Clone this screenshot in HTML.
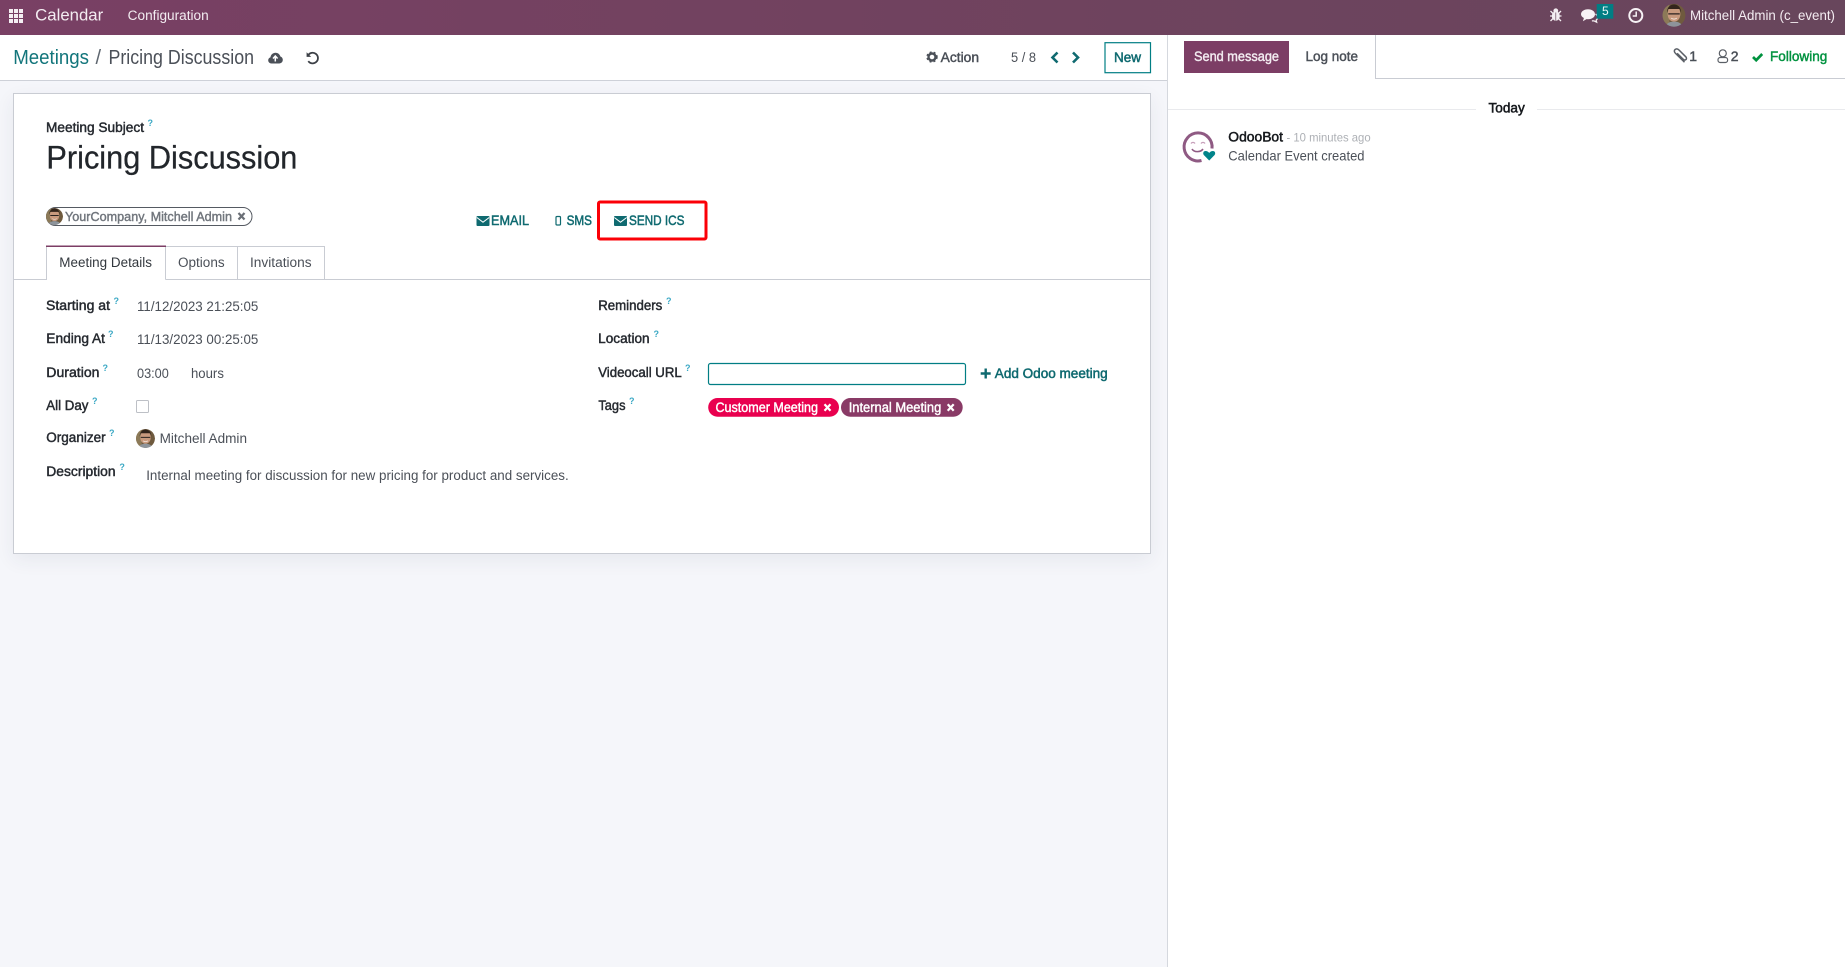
<!DOCTYPE html>
<html lang="en"><head><meta charset="utf-8"><title>Meetings / Pricing Discussion</title>
<style>
html,body{margin:0;padding:0;width:1845px;height:967px;overflow:hidden;background:#f5f6fa;font-family:"Liberation Sans",sans-serif}
.nav{position:absolute;left:0;top:0;width:1845px;height:35px;background:linear-gradient(90deg,#794064,#71425f 45%,#68465c)}
.cp{position:absolute;left:0;top:35px;width:1167px;height:45px;background:#fff;border-bottom:1px solid #ced1d8}
.chatter{position:absolute;left:1167px;top:35px;width:678px;height:932px;background:#fff;border-left:1px solid #d5d8de;box-sizing:border-box}
.sheet{position:absolute;left:13px;top:93px;width:1138px;height:461px;box-sizing:border-box;background:#fff;border:1px solid #c9ccd3;box-shadow:0 6px 18px rgba(40,50,80,.07)}
svg{position:absolute;left:0;top:0}
text{font-family:"Liberation Sans",sans-serif;font-size:14px;fill:#4b5058}
.b{fill:#262a30;stroke:#262a30;stroke-width:.45;font-size:13.5px}
.q{font-weight:bold;fill:#3aa8c4;font-size:9px}
.w{fill:#f3ecf1}
.l{fill:#0f6a70;stroke:#0f6a70;stroke-width:.5;font-size:14px}
.tt{fill:#fff;stroke:#fff;stroke-width:.42;font-size:14px}
.k{fill:#15181c;stroke:#15181c;stroke-width:.5}
.m{stroke:#4b5058;stroke-width:.45}
</style></head><body>
<div class="nav"></div><div class="cp"></div><div class="chatter"></div><div class="sheet"></div>
<svg width="1845" height="967" viewBox="0 0 1845 967" xmlns="http://www.w3.org/2000/svg">
<defs>
<clipPath id="cc"><circle r="10"/></clipPath>
<g id="av"><g clip-path="url(#cc)"><circle r="10" fill="#6f5a3e"/><rect x="-10" y="-10" width="6" height="20" fill="#8c7a58"/><path d="M-5.500-1c0-5 2.500-6.500 5.500-6.500S5.500-6 5.500-1c0 4-2.500 6.500-5.500 6.500S-5.500 3-5.500-1z" fill="#c99a7e"/><path d="M-6-2c-.5-5 3-7.500 6-7.500S6.500-7 6-2l-1-3.500H-5z" fill="#33251c"/><path d="M-5-1.200h4M1-1.200h4M-1-1.200h2" stroke="#2b2320" stroke-width="1.100"/><path d="M-2.500 2.500c1.500 1 3.500 1 5 0" stroke="#f1e2d8" stroke-width=".8" fill="none"/><path d="M-8 11c1-4 4-5.500 8-5.500s7 1.500 8 5.500z" fill="#8d949b"/></g></g>
</defs>

<!-- navbar -->
<g fill="#f4eef2"><rect x="9" y="9" width="4" height="4"/><rect x="14" y="9" width="4" height="4"/><rect x="19" y="9" width="4" height="4"/><rect x="9" y="14" width="4" height="4"/><rect x="14" y="14" width="4" height="4"/><rect x="19" y="14" width="4" height="4"/><rect x="9" y="19" width="4" height="4"/><rect x="14" y="19" width="4" height="4"/><rect x="19" y="19" width="4" height="4"/></g>
<text class="w" x="35.200" y="20.700" style="font-size:16.500px" textLength="68" lengthAdjust="spacingAndGlyphs">Calendar</text>
<text class="w" x="127.700" y="20" style="font-size:13.500px" textLength="81" lengthAdjust="spacingAndGlyphs">Configuration</text>
<!-- bug -->
<g fill="#f4eef2" stroke="#f4eef2"><ellipse cx="1555.800" cy="16" rx="4" ry="4.800" stroke="none"/><circle cx="1555.800" cy="10.800" r="2.400" stroke="none"/><path d="M1550.500 11l2.500 2.500M1561 11l-2.500 2.500M1550 16h3M1561.500 16h-3M1550.500 21l2.500-2.500M1561 21l-2.500-2.500" fill="none" stroke-width="1.300"/></g>
<path d="M1555.800 12.500v8" stroke="#68465c" stroke-width=".7"/>
<!-- chat -->
<path d="M1588 9.200c4 0 7 2.200 7 5s-3 5-7 5l-1.500-.1-3.600 2.200 1-3.300c-1.800-.9-2.900-2.300-2.900-3.800 0-2.800 3-5 7-5z" fill="#f7f2f5"/>
<path d="M1595.500 14c1.400 1 2.200 2.100 2.200 3.300 0 1.200-.6 2.200-1.600 2.900l.6 2-2.800-1.400-2 .1" fill="none" stroke="#f7f2f5" stroke-width="1.200"/>
<rect x="1596.700" y="4" width="16.600" height="14.700" fill="#017e84"/>
<text x="1602" y="14.800" style="font-size:12px;fill:#e9f6f6">5</text>
<!-- clock -->
<circle cx="1635.800" cy="15.500" r="6.500" fill="none" stroke="#f7f2f5" stroke-width="2"/><path d="M1636.200 11.500v4.500h-3.500" fill="none" stroke="#f7f2f5" stroke-width="1.500"/>
<g transform="translate(1674 15.300) scale(1.150)"><use href="#av"/></g>
<text class="w" x="1690" y="20" style="font-size:14px" textLength="145" lengthAdjust="spacingAndGlyphs">Mitchell Admin (c_event)</text>

<!-- control panel -->
<text x="13.200" y="64" style="font-size:20px;fill:#12757b" textLength="75.800" lengthAdjust="spacingAndGlyphs">Meetings</text>
<text x="95.500" y="64" style="font-size:20px;fill:#5f6770">/</text>
<text x="108.500" y="64" style="font-size:20px;fill:#4b5058" textLength="145.500" lengthAdjust="spacingAndGlyphs">Pricing Discussion</text>
<path d="M271.500 63.500c-2 0-3.300-1.400-3.300-3.200 0-1.500 1-2.700 2.300-3.100.3-2.600 2.500-4.400 5-4.400 2.400 0 4.300 1.500 4.900 3.700 1.500.4 2.400 1.800 2.400 3.300 0 2.100-1.500 3.700-3.700 3.700z" fill="#4b5058"/><path d="M275.300 61.500v-5M273 58.500l2.300-2.500 2.300 2.500" fill="none" stroke="#fff" stroke-width="1.500"/>
<path d="M308 55.500a5.300 5.300 0 1 1 .3 5.600" fill="none" stroke="#3c4046" stroke-width="1.800"/><path d="M306.600 52.300v4.600h4.600z" fill="#3c4046"/>
<circle cx="932" cy="57" r="3.500" fill="none" stroke="#4b5058" stroke-width="2.400"/><circle cx="932" cy="57" r="5" fill="none" stroke="#4b5058" stroke-width="1.400" stroke-dasharray="2 2.190"/>
<text class="m" x="940.700" y="62" style="font-size:13.500px" textLength="38.300" lengthAdjust="spacingAndGlyphs">Action</text>
<text x="1011" y="62" style="font-size:13.500px" textLength="25" lengthAdjust="spacingAndGlyphs">5 / 8</text>
<path d="M1057.500 52.500l-5 5 5 5M1073 52.500l5 5-5 5" fill="none" stroke="#0f6a70" stroke-width="2.600"/>
<rect x="1105" y="42.700" width="45.500" height="30" fill="#fff" stroke="#017e84" stroke-width="1.200"/>
<text class="l" x="1114" y="62" textLength="27" lengthAdjust="spacingAndGlyphs">New</text>

<!-- sheet header -->
<text class="b" x="46" y="132" textLength="98" lengthAdjust="spacingAndGlyphs">Meeting Subject</text>
<text class="q" x="147.500" y="126">?</text>
<text x="46.400" y="168.500" style="font-size:32px;fill:#22262b;stroke:#22262b;stroke-width:.25" textLength="251" lengthAdjust="spacingAndGlyphs">Pricing Discussion</text>

<rect x="46.500" y="207.500" width="205.500" height="18" rx="9" fill="#fff" stroke="#555a62" stroke-width="1"/>
<g transform="translate(54.500 216.500) scale(.85)"><use href="#av"/></g>
<text x="65" y="221" style="font-size:13px;fill:#71767d;stroke:#71767d;stroke-width:.42" textLength="167" lengthAdjust="spacingAndGlyphs">YourCompany, Mitchell Admin</text>
<path d="M238.500 213l6 6.500M244.500 213l-6 6.500" stroke="#6a6f76" stroke-width="2.200"/>

<rect x="476.500" y="216" width="13" height="10" rx="1" fill="#0f6a70"/><path d="M476.800 217.500l6.200 4.700 6.200-4.700" fill="none" stroke="#fff" stroke-width="1"/>
<text class="l" x="491" y="224.900" textLength="38" lengthAdjust="spacingAndGlyphs">EMAIL</text>
<rect x="556" y="216.500" width="4.500" height="8.500" rx="1" fill="none" stroke="#0f6a70" stroke-width="1.200"/>
<text class="l" x="566.600" y="224.900" textLength="25.400" lengthAdjust="spacingAndGlyphs">SMS</text>
<rect x="614" y="216" width="13" height="10" rx="1" fill="#0f6a70"/><path d="M614.300 217.500l6.200 4.700 6.200-4.700" fill="none" stroke="#fff" stroke-width="1"/>
<text class="l" x="629" y="224.900" textLength="55.500" lengthAdjust="spacingAndGlyphs">SEND ICS</text>
<rect x="598.500" y="202" width="107.500" height="37" rx="1.500" fill="none" stroke="#fb0007" stroke-width="3"/>

<!-- tabs -->
<path d="M14 279.500H46.500V246.500H165.500V279.500M165.500 279.500H1150M165.500 246.500H324.500V279.500M237.500 246.500V279.500" fill="none" stroke="#c9ccd3" stroke-width="1"/>
<rect x="46" y="245.500" width="120" height="1.500" fill="#7c3e65"/>
<text x="59.300" y="267" style="font-size:13.500px;fill:#33383e" textLength="92.700" lengthAdjust="spacingAndGlyphs">Meeting Details</text>
<text x="178" y="267" style="font-size:13.500px" textLength="46.600" lengthAdjust="spacingAndGlyphs">Options</text>
<text x="250" y="267" style="font-size:13.500px" textLength="61.600" lengthAdjust="spacingAndGlyphs">Invitations</text>

<!-- left column -->
<text class="b" x="46" y="310" textLength="64" lengthAdjust="spacingAndGlyphs">Starting at</text><text class="q" x="113.500" y="304">?</text>
<text x="137" y="311" textLength="121.300" lengthAdjust="spacingAndGlyphs">11/12/2023 21:25:05</text>
<text class="b" x="46.300" y="343" textLength="58.700" lengthAdjust="spacingAndGlyphs">Ending At</text><text class="q" x="108" y="337">?</text>
<text x="137" y="344" textLength="121.300" lengthAdjust="spacingAndGlyphs">11/13/2023 00:25:05</text>
<text class="b" x="46.300" y="377" textLength="53.200" lengthAdjust="spacingAndGlyphs">Duration</text><text class="q" x="102.500" y="371">?</text>
<text x="137" y="378" textLength="31.800" lengthAdjust="spacingAndGlyphs">03:00</text>
<text x="191" y="378" textLength="32.900" lengthAdjust="spacingAndGlyphs">hours</text>
<text class="b" x="46.300" y="410" textLength="42.100" lengthAdjust="spacingAndGlyphs">All Day</text><text class="q" x="92" y="404">?</text>
<rect x="136.500" y="400.500" width="12" height="12" rx="1" fill="#fff" stroke="#bdc0c6" stroke-width="1"/>
<text class="b" x="46.300" y="442" textLength="59.300" lengthAdjust="spacingAndGlyphs">Organizer</text><text class="q" x="109" y="436">?</text>
<g transform="translate(145.500 438.500) scale(.95)"><use href="#av"/></g>
<text x="159.600" y="443" textLength="87.400" lengthAdjust="spacingAndGlyphs">Mitchell Admin</text>
<text class="b" x="46.300" y="476" textLength="69.300" lengthAdjust="spacingAndGlyphs">Description</text><text class="q" x="119.400" y="470">?</text>
<text x="146.200" y="480" style="font-size:13.500px" textLength="422.500" lengthAdjust="spacingAndGlyphs">Internal meeting for discussion for new pricing for product and services.</text>

<!-- right column -->
<text class="b" x="598.200" y="310" textLength="64.100" lengthAdjust="spacingAndGlyphs">Reminders</text><text class="q" x="666" y="304">?</text>
<text class="b" x="598.200" y="343" textLength="51.400" lengthAdjust="spacingAndGlyphs">Location</text><text class="q" x="653.500" y="337">?</text>
<text class="b" x="598.200" y="377" textLength="83.600" lengthAdjust="spacingAndGlyphs">Videocall URL</text><text class="q" x="685" y="371">?</text>
<rect x="708.500" y="363.500" width="257" height="21" rx="2" fill="#fff" stroke="#017e84" stroke-width="1.200"/>
<path d="M985.700 368.500v10M980.700 373.500h10" stroke="#0f6a70" stroke-width="2.400"/>
<text class="l" x="994.800" y="378" style="font-size:13.500px" textLength="112.900" lengthAdjust="spacingAndGlyphs">Add Odoo meeting</text>
<text class="b" x="598.400" y="410" textLength="27.100" lengthAdjust="spacingAndGlyphs">Tags</text><text class="q" x="629" y="404">?</text>
<rect x="708.200" y="398" width="130.800" height="18.700" rx="9.300" fill="#e9004f"/>
<text class="tt" x="715.500" y="412" style="font-size:13.500px" textLength="102.500" lengthAdjust="spacingAndGlyphs">Customer Meeting</text>
<path d="M824.500 404.200l6 6.500M830.500 404.200l-6 6.500" stroke="#fff" stroke-width="2.200"/>
<rect x="841" y="398" width="121.700" height="18.700" rx="9.300" fill="#893a66"/>
<text class="tt" x="848.700" y="412" style="font-size:13.500px" textLength="92.600" lengthAdjust="spacingAndGlyphs">Internal Meeting</text>
<path d="M947.700 404.200l6 6.500M953.700 404.200l-6 6.500" stroke="#fff" stroke-width="2.200"/>

<!-- chatter -->
<rect x="1184" y="41" width="105" height="32" fill="#7c3e65"/>
<text class="tt" x="1194" y="61" style="font-size:13.500px;fill:#f3ecf1;stroke:#f3ecf1" textLength="85" lengthAdjust="spacingAndGlyphs">Send message</text>
<text class="m" x="1305.500" y="61" style="font-size:13.500px" textLength="52.500" lengthAdjust="spacingAndGlyphs">Log note</text>
<path d="M1375.500 35V78.500H1845" fill="none" stroke="#c9ccd3" stroke-width="1"/>
<path d="M1684.500 62.200l-9-8.800c-1.400-1.400-1.500-3-.4-3.900s2.700-.7 4 .6l6.700 6.700c.9 1 .9 2.100.1 2.800s-1.900.5-2.800-.4l-6-5.900" fill="none" stroke="#5a5f66" stroke-width="1.500"/>
<text class="m" x="1689.300" y="61" style="font-size:14px">1</text>
<circle cx="1722.800" cy="53.300" r="3.500" fill="none" stroke="#5a5f66" stroke-width="1.200"/><rect x="1718" y="57.500" width="9.600" height="5" rx="2.200" fill="none" stroke="#5a5f66" stroke-width="1.200"/>
<text class="m" x="1730.800" y="61" style="font-size:14px">2</text>
<path d="M1753 57l3.200 3.200 6-6.200" fill="none" stroke="#00923f" stroke-width="2.700"/>
<text x="1770" y="61" style="font-size:14px;fill:#00923f;stroke:#00923f;stroke-width:.45" textLength="57.300" lengthAdjust="spacingAndGlyphs">Following</text>
<path d="M1168 109.500H1476M1537 109.500H1845" stroke="#e9eaed" stroke-width="1"/>
<text class="k" x="1488.500" y="112.700" style="font-size:13.500px" textLength="36.300" lengthAdjust="spacingAndGlyphs">Today</text>
<!-- odoobot -->
<path d="M1212 148.500a14 14 0 1 0-10.500 12" fill="none" stroke="#8f5a83" stroke-width="3"/>
<path d="M1191 143.500c1-1.500 3-1.500 4 0M1201 143.500c1-1.500 3-1.500 4 0" fill="none" stroke="#c79fba" stroke-width="1.300"/>
<path d="M1192 149c2 3.500 8.500 3.500 11 0" fill="none" stroke="#8f5a83" stroke-width="1.600"/>
<path d="M1209.200 161l-5.500-5.700c-1.600-1.800-.7-4.600 1.800-4.600 1.700 0 3 .9 3.700 1.800.7-.9 2-1.800 3.700-1.800 2.500 0 3.400 2.800 1.800 4.600z" fill="#01848a" stroke="#fff" stroke-width=".6"/>
<text class="k" x="1228.300" y="141.300" style="font-size:13.500px" textLength="54.700" lengthAdjust="spacingAndGlyphs">OdooBot</text>
<text x="1286.500" y="141.300" style="font-size:12px;fill:#adb0b5" textLength="84.100" lengthAdjust="spacingAndGlyphs">- 10 minutes ago</text>
<text x="1228.300" y="160.700" style="font-size:14px" textLength="136.200" lengthAdjust="spacingAndGlyphs">Calendar Event created</text>
</svg>
</body></html>
